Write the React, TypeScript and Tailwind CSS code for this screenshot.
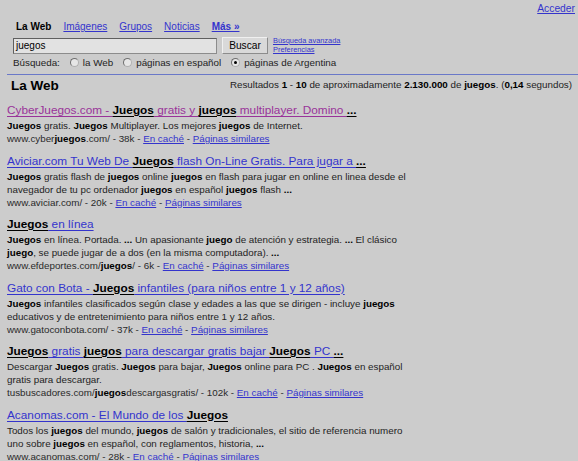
import React from 'react';

type Seg = { t: string; b?: boolean };

interface Result {
    title: Seg[];
    lines: Seg[][];
    url: Seg[];
    size: string;
    visited?: boolean;
}

// quick helper: "**x**" marks bold pieces
const parse = (s: string): Seg[] =>
    s.split(/(\*\*[^*]+\*\*)/).filter(Boolean).map((p) =>
        p.startsWith('**') ? { t: p.slice(2, -2), b: true } : { t: p }
    );

const results: Result[] = [
    {
        title: parse('CyberJuegos.com - **Juegos** gratis y **juegos** multiplayer. Domino **...**'),
        lines: [parse('**Juegos** gratis. **Juegos** Multiplayer. Los mejores **juegos** de Internet.')],
        url: parse('www.cyber**juegos**.com/'),
        size: '38k',
        visited: true,
    },
    {
        title: parse('Aviciar.com Tu Web De **Juegos** flash On-Line Gratis. Para jugar a **...**'),
        lines: [
            parse('**Juegos** gratis flash de **juegos** online **juegos** en flash para jugar en online en linea desde el'),
            parse('navegador de tu pc ordenador **juegos** en español **juegos** flash **...**'),
        ],
        url: parse('www.aviciar.com/'),
        size: '20k',
    },
    {
        title: parse('**Juegos** en línea'),
        lines: [
            parse('**Juegos** en línea. Portada. **...** Un apasionante **juego** de atención y estrategia. **...** El clásico'),
            parse('**juego**, se puede jugar de a dos (en la misma computadora). **...**'),
        ],
        url: parse('www.efdeportes.com/**juegos**/'),
        size: '6k',
    },
    {
        title: parse('Gato con Bota - **Juegos** infantiles (para niños entre 1 y 12 años)'),
        lines: [
            parse('**Juegos** infantiles clasificados según clase y edades a las que se dirigen - incluye **juegos**'),
            parse('educativos y de entretenimiento para niños entre 1 y 12 años.'),
        ],
        url: parse('www.gatoconbota.com/'),
        size: '37k',
    },
    {
        title: parse('**Juegos** gratis **juegos** para descargar gratis bajar **Juegos** PC **...**'),
        lines: [
            parse('Descargar **Juegos** gratis. **Juegos** para bajar, **Juegos** online para PC . **Juegos** en español'),
            parse('gratis para descargar.'),
        ],
        url: parse('tusbuscadores.com/**juegos**descargasgratis/'),
        size: '102k',
    },
    {
        title: parse('Acanomas.com - El Mundo de los **Juegos**'),
        lines: [
            parse('Todos los **juegos** del mundo, **juegos** de salón y tradicionales, el sitio de referencia numero'),
            parse('uno sobre **juegos** en español, con reglamentos, historia, **...**'),
        ],
        url: parse('www.acanomas.com/'),
        size: '28k',
    },
];

const Text = ({ segs }: { segs: Seg[] }) => (
    <>
        {segs.map((s, i) => (s.b ? <b key={i} className="text-black">{s.t}</b> : <span key={i}>{s.t}</span>))}
    </>
);

const Radio = ({ checked }: { checked?: boolean }) => (
    <span className="relative inline-block w-[9px] h-[9px] rounded-full bg-[#e6e6e6] border border-[#b0b0b0] border-t-[#6f6f6f] border-l-[#6f6f6f] align-[-1px] mr-[4px]">
        {checked && <span className="absolute left-[2px] top-[2px] w-[3px] h-[3px] rounded-full bg-black" />}
    </span>
);

const ResultItem = ({ r }: { r: Result }) => {
    const linkColor = r.visited ? 'text-[#993399]' : 'text-[#3434cc]';
    return (
        <div className="mb-[6.5px]">
            <div className="leading-[18px] text-[11.8px] whitespace-nowrap">
                {r.title.map((s, i) =>
                    s.b ? (
                        <b key={i} className="text-black underline underline-offset-[1.5px]">{s.t}</b>
                    ) : (
                        <span key={i} className={`${linkColor} underline underline-offset-[1.5px]`}>{s.t}</span>
                    )
                )}
            </div>
            <div className="text-[9.8px] leading-[13px] text-[#1e1e1e] whitespace-nowrap">
                {r.lines.map((l, i) => (
                    <div key={i}>
                        <Text segs={l} />
                    </div>
                ))}
                <div className="text-[#2a2a2a]">
                    <Text segs={r.url} /> - {r.size} - <a className="text-[#3434cc] underline">En caché</a> -{' '}
                    <a className="text-[#3434cc] underline">Páginas similares</a>
                </div>
            </div>
        </div>
    );
};

export default function App() {
    return (
        <div className="min-h-screen bg-[#cccccc] font-['Liberation_Sans',Arial,sans-serif] text-[#1e1e1e] overflow-hidden">
            {/* sign in */}
            <div className="flex justify-end pr-[3px] pt-[3px] h-[20px] text-[10.3px] leading-[12px]">
                <a className="text-[#3434cc] underline">Acceder</a>
            </div>

            {/* tabs */}
            <div className="flex items-center gap-[12px] pl-[16px] text-[10px] leading-[12px] h-[14px]">
                <b className="text-black">La Web</b>
                <a className="text-[#3434cc] underline">Imágenes</a>
                <a className="text-[#3434cc] underline">Grupos</a>
                <a className="text-[#3434cc] underline">Noticias</a>
                <a className="text-[#3434cc] underline font-bold">Más »</a>
            </div>

            {/* search box */}
            <div className="flex items-center pl-[13px] mt-[3px] h-[17px]">
                <div className="w-[204px] h-[16px] bg-[#e2e2e2] border border-[#8c8c8c] border-t-[#5f5f5f] border-l-[#5f5f5f] text-[10px] leading-[14px] pl-[2px] text-black">
                    juegos
                </div>
                <button className="ml-[5px] w-[46px] h-[17px] bg-[#d9d9d9] border border-[#8c8c8c] border-t-[#f0f0f0] border-l-[#f0f0f0] text-[10.2px] leading-[15px] text-black">
                    Buscar
                </button>
                <div className="ml-[5px] flex flex-col text-[7.4px] leading-[9px] -mt-[1px]">
                    <a className="text-[#3434cc] underline">Búsqueda avanzada</a>
                    <a className="text-[#3434cc] underline">Preferencias</a>
                </div>
            </div>

            {/* scope radios */}
            <div className="flex items-center pl-[13px] mt-[2px] h-[13px] text-[9.8px] leading-[13px] text-[#1e1e1e] whitespace-nowrap">
                <span className="mr-[10px]">Búsqueda:</span>
                <span className="mr-[10px] flex items-center"><Radio />la Web</span>
                <span className="mr-[10px] flex items-center"><Radio />páginas en español</span>
                <span className="flex items-center"><Radio checked />páginas de Argentina</span>
            </div>

            {/* header bar */}
            <div className="ml-[7px] mt-[5px] border-t border-[#6a78c8] flex items-center justify-between h-[21px] pl-[4px] pr-[6px]">
                <b className="text-[13.5px] text-black leading-[16px] mt-[1px]">La Web</b>
                <span className="text-[9.8px] leading-[13px] -mt-[2px]">
                    Resultados <b className="text-black">1</b> - <b className="text-black">10</b> de aproximadamente{' '}
                    <b className="text-black">2.130.000</b> de <b className="text-black">juegos</b>. (
                    <b className="text-black">0,14</b> segundos)
                </span>
            </div>

            {/* results */}
            <div className="pl-[7px] mt-[6px]">
                {results.map((r, i) => (
                    <ResultItem key={i} r={r} />
                ))}
            </div>
        </div>
    );
}
